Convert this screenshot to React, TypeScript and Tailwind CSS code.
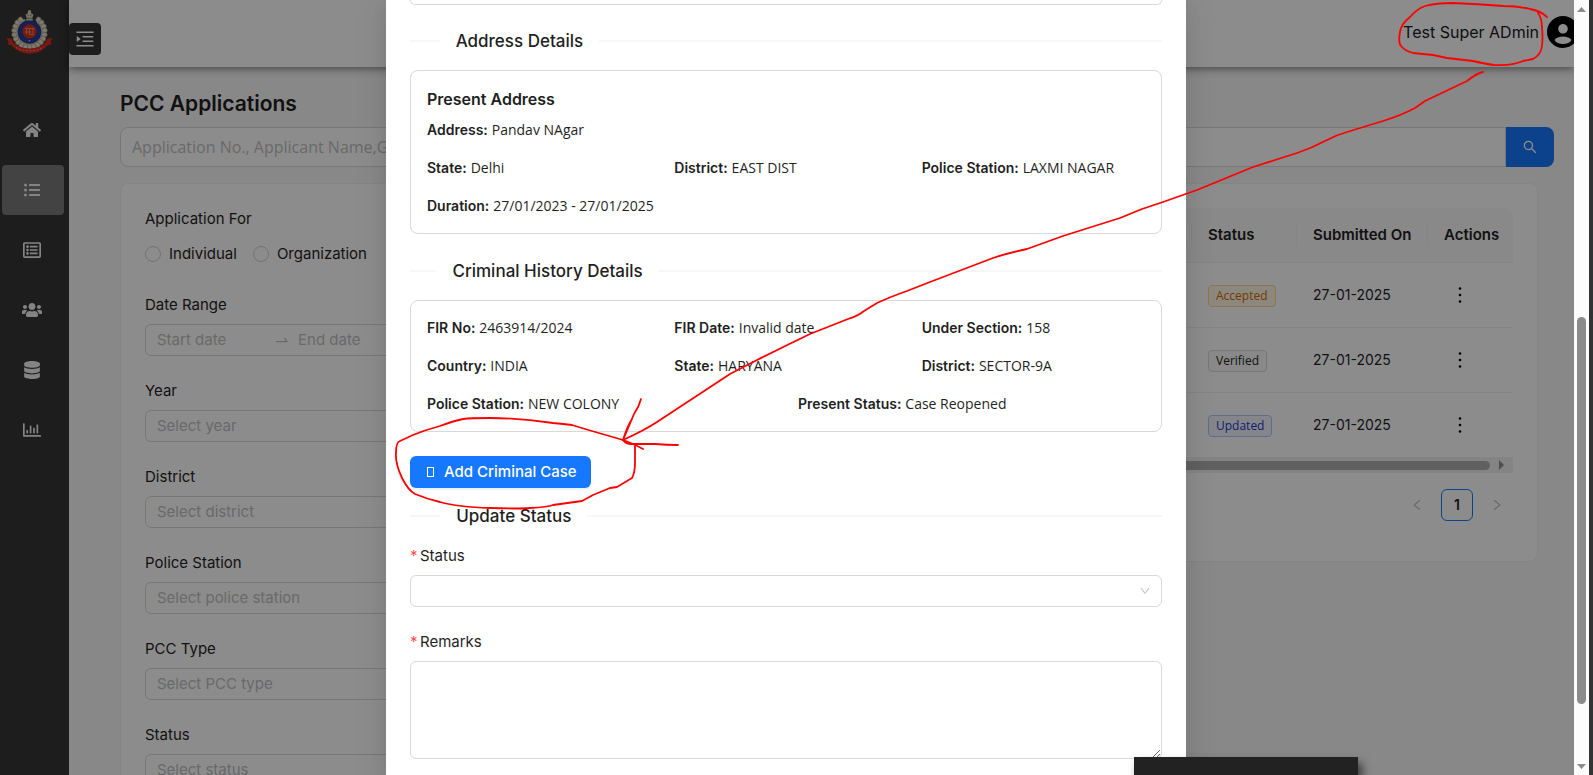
import React from 'react';
import { FaHome, FaListUl, FaRegListAlt, FaUsers, FaDatabase, FaRegChartBar } from 'react-icons/fa';
import { AiOutlineMenuUnfold, AiOutlineSearch, AiOutlineSwapRight, AiOutlineDown, AiOutlineLeft, AiOutlineRight } from 'react-icons/ai';
import { clsx } from 'clsx';

const NAV_ITEMS = [
  { label: 'Home', icon: FaHome },
  { label: 'Applications', icon: FaListUl, active: true },
  { label: 'Reports', icon: FaRegListAlt },
  { label: 'Users', icon: FaUsers },
  { label: 'Masters', icon: FaDatabase },
  { label: 'Statistics', icon: FaRegChartBar },
];

const SELECT_FILTERS = [
  { id: 'year', label: 'Year', placeholder: 'Select year' },
  { id: 'district', label: 'District', placeholder: 'Select district' },
  { id: 'police-station', label: 'Police Station', placeholder: 'Select police station' },
  { id: 'pcc-type', label: 'PCC Type', placeholder: 'Select PCC type' },
  { id: 'filter-status', label: 'Status', placeholder: 'Select status' },
];

const ROWS = [
  { status: 'Accepted', date: '27-01-2025', tag: 'text-[#d46b08] bg-[#fff7e6] border-[#ffd591]' },
  { status: 'Verified', date: '27-01-2025', tag: 'text-[#1f1f1f] bg-[#fafafa] border-[#d9d9d9]' },
  { status: 'Updated', date: '27-01-2025', tag: 'text-[#1d39c4] bg-[#f0f5ff] border-[#adc6ff]' },
];

// Angles of the wreath leaves, clockwise from the top, leaving room for the capital
const LEAF_ANGLES = Array.from({ length: 19 }, (_, i) => 36 + i * 16);

function Emblem() {
  return (
    <svg viewBox="0 0 47 47" className="w-[47px] h-[47px]" aria-label="Police emblem">
      {LEAF_ANGLES.map((angle) => (
        <g key={angle} transform={`rotate(${angle} 23.5 23)`}>
          <ellipse cx="23.5" cy="7.8" rx="2.5" ry="2.8" fill="#e6dcc8" stroke="#857a66" strokeWidth="0.5" />
          <ellipse cx="25.5" cy="10.8" rx="1.8" ry="1.7" fill="#d6c9ae" />
        </g>
      ))}
      <circle cx="23.5" cy="23" r="11.8" fill="#1d3a94" />
      <circle cx="23.5" cy="23" r="9.3" fill="none" stroke="#4a62ab" strokeWidth="1" strokeDasharray="1 1.6" />
      <circle cx="23.5" cy="22.5" r="7.2" fill="#d92c20" />
      <path d="M19 19.5h9.500M20.500 19.500v5.500M23.500 19.500v6.500M27 19.500v5M19 23h6M24 25.500h4" stroke="#d8935c" strokeWidth="1" fill="none" />
      <path d="M20 11.500h7l-0.700-2.500 1.200-3.500-2-1L24.500 1h-2l-1 3.500-2 1 1.200 3.500z" fill="#d9cdb4" />
      <path d="M20.500 9.300h6M21.500 5.500l1 1.500M25.500 5.500l-1 1.500" stroke="#6b6252" strokeWidth="0.700" />
      <circle cx="23.5" cy="31.8" r="0.8" fill="#d8cdb8" />
      <path d="M0.500 29l5 0.500c1.500 4 4 6.500 7.500 8 6.500 2.500 14.500 2.500 21 0 3.500-1.500 6-4 7.500-8l5-0.500-2 3.500 1 3-4 0.500c-8 11.500-28 11.500-36 0l-4-0.500 1-3z" fill="#d92c20" />
      <path d="M10 38.500c8 4.500 19 4.500 27 0" stroke="#e88a80" strokeWidth="1" strokeDasharray="2 1.500" fill="none" />
    </svg>
  );
}

function Sidebar() {
  return (
    <aside className="w-[69px] shrink-0 bg-[#353535]">
      <div className="flex h-[105px] pl-[6px] pt-[9px]">
        <Emblem />
      </div>
      <nav className="flex flex-col gap-[10px] pl-[2px]">
        {NAV_ITEMS.map(({ label, icon: Icon, active }) => (
          <a
            key={label}
            href="#"
            aria-label={label}
            className={clsx('flex h-[50px] w-[62px] items-center justify-center rounded pr-[2px] text-[#f0f0f0]', active && 'bg-[#7b7b7b]')}
          >
            <Icon size={label === 'Users' ? 20 : label === 'Applications' ? 16 : 18} />
          </a>
        ))}
      </nav>
    </aside>
  );
}

function Header() {
  return (
    <header className="z-1 flex h-[67px] shrink-0 items-start justify-between bg-white shadow-[0_2px_8px_rgba(0,0,0,0.45)]">
      <button aria-label="Expand menu" className="mt-[23px] flex size-8 items-center justify-center rounded bg-[#353535] text-white">
        <AiOutlineMenuUnfold size={22} />
      </button>
      <div className="-mr-[5px] flex h-16 items-center gap-2">
        <span className="text-base text-[#1a1a1a]">Test Super ADmin</span>
        <svg viewBox="2 2 20 20" className="size-8" aria-label="Account">
          <path d="M12 2C6.480 2 2 6.480 2 12s4.480 10 10 10 10-4.480 10-10S17.520 2 12 2zm0 5c1.660 0 3 1.340 3 3s-1.340 3-3 3-3-1.340-3-3 1.340-3 3-3zm0 12.500c-2.500 0-4.500-1-5.300-2.500 0.800-1.300 2.900-2.200 5.300-2.200s4.500 0.900 5.300 2.200c-0.800 1.500-2.800 2.500-5.300 2.500z" />
        </svg>
      </div>
    </header>
  );
}

function Filters() {
  return (
    <section className="flex h-[720px] w-[340px] shrink-0 flex-col gap-6 rounded-lg border border-[#f0f0f0] bg-white p-6">
      <fieldset>
        <legend className="mb-2 text-[15px] leading-[22px]">Application For</legend>
        <div className="flex h-8 items-center gap-4">
          {['Individual', 'Organization'].map((name) => (
            <label key={name} className="flex items-center gap-2 text-[15px]">
              <input type="radio" name="application-for" className="size-4 appearance-none rounded-full border border-[#d0d0d0] bg-white" />
              {name}
            </label>
          ))}
        </div>
      </fieldset>
      <div className="flex flex-col gap-2">
        <label htmlFor="start-date" className="text-[15px] leading-[22px]">Date Range</label>
        <div className="flex h-8 items-center rounded-md border border-[#d9d9d9] px-[11px]">
          <input id="start-date" placeholder="Start date" className="w-[117px] text-[15px] placeholder:text-[#bfbfbf]" />
          <AiOutlineSwapRight size={16} className="mr-2 shrink-0 text-[#bfbfbf]" />
          <input aria-label="End date" placeholder="End date" className="min-w-0 flex-1 text-[15px] placeholder:text-[#bfbfbf]" />
        </div>
      </div>
      {SELECT_FILTERS.map(({ id, label, placeholder }) => (
        <div key={id} className="flex flex-col gap-2">
          <label htmlFor={id} className="text-[15px] leading-[22px]">{label}</label>
          <select id={id} className="h-8 appearance-none rounded-md border border-[#d9d9d9] bg-white px-[11px] text-[15px] text-[#bfbfbf]">
            <option>{placeholder}</option>
          </select>
        </div>
      ))}
    </section>
  );
}

function ApplicationsTable() {
  return (
    <section className="min-w-0 flex-1 self-start rounded-lg border border-[#f0f0f0] bg-white p-6">
      <table className="w-full table-fixed border-separate border-spacing-0 text-left">
        <colgroup>
          <col />
          <col className="w-[105px]" />
          <col className="w-[131px]" />
          <col className="w-[86px]" />
        </colgroup>
        <thead>
          <tr className="h-[55px]">
            <th className="border-b border-[#f0f0f0] bg-[#fafafa]" />
            {['Status', 'Submitted On', 'Actions'].map((title) => (
              <th key={title} className="border-b border-[#f0f0f0] bg-[#fafafa] p-0 text-[15px] font-semibold whitespace-nowrap last:rounded-tr-lg">
                <div className="border-l border-[#f0f0f0] pl-4">{title}</div>
              </th>
            ))}
          </tr>
        </thead>
        <tbody>
          {ROWS.map((row, index) => (
            <tr key={row.status} className={index < ROWS.length - 1 ? 'h-[65px] *:border-b *:border-[#f0f0f0]' : 'h-16'}>
              <td />
              <td className="pl-[17px]">
                <span className={clsx("inline-block rounded border px-[7px] align-middle font-['Open_Sans',sans-serif] text-xs leading-5", row.tag)}>
                  {row.status}
                </span>
              </td>
              <td className="pl-[17px] text-sm">{row.date}</td>
              <td className="pl-[25px]">
                <button aria-label="Row actions" className="flex w-4 justify-center">
                  <svg viewBox="0 0 16 16" className="size-4">
                    <circle cx="8" cy="1.500" r="1.300" />
                    <circle cx="8" cy="8" r="1.300" />
                    <circle cx="8" cy="14.500" r="1.300" />
                  </svg>
                </button>
              </td>
            </tr>
          ))}
        </tbody>
      </table>
      <div className="flex h-4 items-center bg-[#f0f0f0] pr-[9px]">
        <div className="h-[9px] flex-1 rounded-full bg-[#b0b0b0]" />
        <svg viewBox="0 0 5 10" className="ml-[9px] h-[10px] w-[5px] fill-[#909090]">
          <path d="M0 0L5 5L0 10z" />
        </svg>
      </div>
      <div className="my-4 flex items-center justify-end gap-2">
        <button aria-label="Previous page" className="flex size-8 items-center justify-center text-[#b8b8b8]">
          <AiOutlineLeft size={14} />
        </button>
        <button className="size-8 rounded-md border border-[#1677ff] bg-white text-sm font-semibold">1</button>
        <button aria-label="Next page" className="flex size-8 items-center justify-center text-[#b8b8b8]">
          <AiOutlineRight size={14} />
        </button>
      </div>
    </section>
  );
}

function SectionDivider({ title, className }: { title: string; className?: string }) {
  return (
    <div className={clsx('mb-4 flex h-[26px] items-center gap-4', className)}>
      <div className="h-[2px] flex-[5] bg-[#f7f7f7]" />
      <h3 className="text-[17px] leading-6 font-medium whitespace-nowrap">{title}</h3>
      <div className="h-[2px] flex-[95] bg-[#f7f7f7]" />
    </div>
  );
}

function Field({ name, value }: { name: string; value: string }) {
  return (
    <p className="text-sm leading-[22px]">
      <strong className="font-semibold">{name}:</strong>{' '}
      <span className="font-['Open_Sans',sans-serif]">{value}</span>
    </p>
  );
}

function RequiredLabel({ htmlFor, children }: { htmlFor: string; children: React.ReactNode }) {
  return (
    <label htmlFor={htmlFor} className="mb-2 flex gap-1 text-[15px] leading-[22px]">
      <span className="w-[6px] text-[#ff4d4f]">*</span>
      {children}
    </label>
  );
}

function ApplicationModal() {
  return (
    <div role="dialog" aria-label="Application details" className="min-h-full w-[800px] bg-white px-6 pb-6 shadow-[0_6px_16px_rgba(0,0,0,0.08),0_9px_28px_8px_rgba(0,0,0,0.05)]">
      <div className="h-[5px] rounded-b-lg border border-t-0 border-[#d9d9d9]" />

      <SectionDivider title="Address Details" className="mt-[23px]" />
      <div className="rounded-lg border border-[#d9d9d9] p-4">
        <h4 className="mb-2 text-base font-semibold">Present Address</h4>
        <div className="flex flex-col gap-4">
          <Field name="Address" value="Pandav NAgar" />
          <div className="grid grid-cols-3 gap-x-6">
            <Field name="State" value="Delhi" />
            <Field name="District" value="EAST DIST" />
            <Field name="Police Station" value="LAXMI NAGAR" />
          </div>
          <Field name="Duration" value="27/01/2023 - 27/01/2025" />
        </div>
      </div>

      <SectionDivider title="Criminal History Details" className="mt-6" />
      <div className="flex flex-col gap-4 rounded-lg border border-[#d9d9d9] p-4">
        <div className="grid grid-cols-3 gap-x-6 gap-y-4">
          <Field name="FIR No" value="2463914/2024" />
          <Field name="FIR Date" value="Invalid date" />
          <Field name="Under Section" value="158" />
          <Field name="Country" value="INDIA" />
          <Field name="State" value="HARYANA" />
          <Field name="District" value="SECTOR-9A" />
        </div>
        <div className="grid grid-cols-2 gap-x-6">
          <Field name="Police Station" value="NEW COLONY" />
          <Field name="Present Status" value="Case Reopened" />
        </div>
      </div>

      <button className="mt-6 flex h-8 w-[181px] items-center gap-[10px] rounded-md bg-[#1677ff] pl-[17px] text-[15px] font-medium whitespace-nowrap text-white shadow-[0_2px_0_rgba(5,145,255,0.1)]">
        <span className="h-[10px] w-[7px] border border-white" />
        Add Criminal Case
      </button>

      <SectionDivider title="Update Status" className="mt-[15px]" />
      <form>
        <RequiredLabel htmlFor="status">Status</RequiredLabel>
        <div className="relative mb-6">
          <select id="status" className="block h-8 w-full appearance-none rounded-md border border-[#d9d9d9] bg-white px-[11px] text-sm">
            <option value="" />
          </select>
          <AiOutlineDown size={12} className="pointer-events-none absolute top-[10px] right-[11px] text-[#bfbfbf]" />
        </div>
        <RequiredLabel htmlFor="remarks">Remarks</RequiredLabel>
        <textarea id="remarks" className="block h-[98px] w-full rounded-md border border-[#d9d9d9] px-[11px] py-1 text-sm" />
      </form>
    </div>
  );
}

function PageScrollbar() {
  return (
    <div className="flex w-[15px] shrink-0 flex-col items-center bg-[#fcfcfc] pt-[7px] pb-[6px]">
      <svg viewBox="0 0 9 5" className="h-[5px] w-[9px] fill-[#8b8b8b]">
        <path d="M0 5L4.500 0L9 5z" />
      </svg>
      <div className="w-px flex-[305]" />
      <div className="w-[9px] flex-[387] rounded-full bg-[#8b8b8b]" />
      <div className="w-px flex-[60]" />
      <svg viewBox="0 0 9 5" className="h-[5px] w-[9px] fill-[#8b8b8b]">
        <path d="M0 0L4.500 5L9 0z" />
      </svg>
    </div>
  );
}

// Hand-drawn marks linking the signed-in user to the button
function PenMarks() {
  return (
    <svg className="pointer-events-none absolute inset-0 z-30 h-full w-full" fill="none" stroke="#ff0000" strokeWidth="1.800" strokeLinecap="round" strokeLinejoin="round">
      <path d="M1547 17Q1541 11 1530 9Q1518 6 1503 6Q1478 4 1453 3Q1436 3 1425 6Q1417 9 1410 17Q1401 24 1400 32Q1398 43 1401 46Q1405 51 1413 53L1433 55L1447 58L1473 61Q1486 64 1494 65Q1512 66 1523 61L1533 59Q1541 55 1542 46Q1543 38 1542 28Q1542 18 1538 13" />
      <path d="M1483 72Q1477 73 1467 81L1425 101L1415 108Q1402 115 1383 121L1347 132Q1336 135 1325 141Q1312 148 1297 153L1253 167L1197 190L1163 202L1142 209L1120 218L1063 236L1027 249Q1008 253 993 258L930 282L907 291Q890 297 877 303L864 311Q858 316 848 319L810 334Q785 346 757 360L730 374L657 422Q645 430 623 440" />
      <path d="M641 399Q639 407 634 414L623 440Q627 427 632 419M623 440Q632 443 643 449M623 440Q626 444 630 444L655 444Q667 445 678 445" />
      <path d="M623 440L585 429L572 425Q564 424 553 423Q520 418 490 418Q471 418 463 419Q453 421 440 426Q425 430 413 435L400 441Q396 442 396 453Q395 463 402 478Q408 490 415 494Q427 499 440 502Q458 507 490 508Q520 509 530 508Q548 507 553 505L582 501L593 495L610 488L617 487L632 478Q635 473 635 462V445" />
    </svg>
  );
}

export default function App() {
  return (
    <div className="relative h-screen overflow-hidden bg-[#333333] font-[Inter,sans-serif] text-[#1f1f1f]">
      <div className="flex h-full pr-1">
        <div className="relative min-w-0 flex-1 overflow-hidden">
          <div className="flex h-full overflow-hidden">
            <Sidebar />
            <div className="flex min-w-0 flex-1 flex-col bg-[#f7f7f7]">
              <Header />
              <main className="min-h-0 flex-1 overflow-hidden pt-[22px] pr-5 pl-[51px]">
                <h1 className="mb-2 text-[21px] leading-[30px] font-semibold">PCC Applications</h1>
                <div className="mb-4 flex h-10">
                  <input
                    aria-label="Search applications"
                    placeholder="Application No., Applicant Name,Guardian Name"
                    className="min-w-0 flex-1 rounded-l-lg border border-[#d9d9d9] bg-white px-[11px] font-['Open_Sans',sans-serif] text-base placeholder:text-[#bfbfbf]"
                  />
                  <button aria-label="Search" className="flex w-12 items-center justify-center rounded-r-lg bg-[#1677ff] text-white">
                    <AiOutlineSearch size={16} />
                  </button>
                </div>
                <div className="flex gap-4 pr-4">
                  <Filters />
                  <ApplicationsTable />
                </div>
              </main>
            </div>
          </div>
          <div className="absolute inset-0 z-10 flex justify-center bg-black/45 pr-[2px]">
            <ApplicationModal />
          </div>
        </div>
        <PageScrollbar />
      </div>
      <div className="absolute right-[235px] bottom-0 z-20 h-[18px] w-56 bg-[#222222] shadow-[4px_6px_10px_rgba(0,0,0,0.6)]" />
      <PenMarks />
    </div>
  );
}
